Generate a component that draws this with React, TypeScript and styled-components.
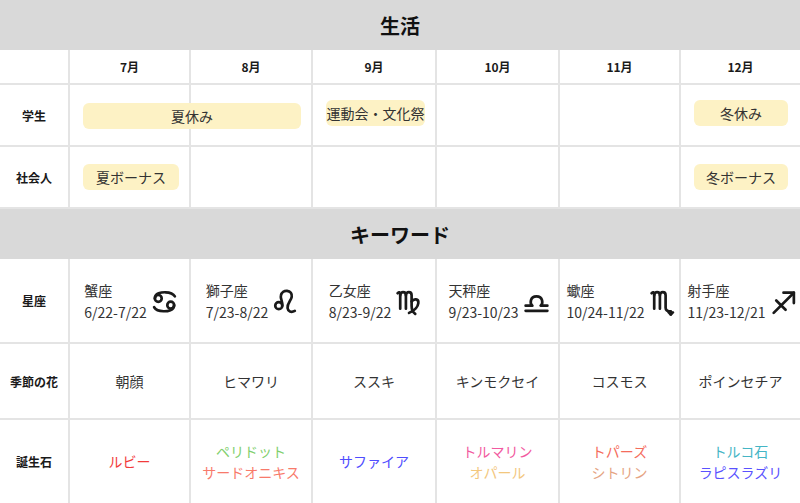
import React from 'react';
import styled, { createGlobalStyle } from 'styled-components';

const COLS = '70px 121px 122px 124px 123px 121px 1fr';
const LINE = '#e4e4e4';

const GlobalStyle = createGlobalStyle`
    *, *::before, *::after {
        box-sizing: border-box;
    }
    body {
        margin: 0;
        background: #ffffff;
        font-family: 'Noto Sans CJK JP', 'Noto Sans', sans-serif;
        color: #333333;
    }
`;

const Page = styled.div`
    width: 800px;
    height: 503px;
    overflow: hidden;
`;

const SectionTitle = styled.div`
    height: 50px;
    display: flex;
    align-items: center;
    justify-content: center;
    background-color: #d9d9d9;
    font-size: 20px;
    font-weight: 700;
    color: #111111;
`;

const Row = styled.div<{ $h: number; $last?: boolean }>`
    display: grid;
    grid-template-columns: ${COLS};
    height: ${(p) => p.$h}px;
    border-bottom: ${(p) => (p.$last ? 'none' : `2px solid ${LINE}`)};
`;

const Cell = styled.div<{ $col: number }>`
    grid-row: 1;
    grid-column: ${(p) => p.$col};
    display: flex;
    align-items: center;
    justify-content: center;
    border-right: ${(p) => (p.$col === 7 ? 'none' : `2px solid ${LINE}`)};
    font-size: 14px;
    color: #333333;
`;

const Label = styled(Cell)`
    font-size: 12px;
    font-weight: 700;
    color: #1a1a1a;
`;

const Month = styled(Cell)`
    font-size: 12px;
    font-weight: 700;
    color: #1a1a1a;
`;

const ChipSlot = styled.div<{ $col: number; $span: number; $dy: number }>`
    grid-row: 1;
    grid-column: ${(p) => p.$col} / span ${(p) => p.$span};
    display: flex;
    align-items: center;
    padding: 0 12px 0 13px;
    margin-top: ${(p) => p.$dy}px;
    z-index: 1;
`;

const Chip = styled.div`
    width: 100%;
    height: 26px;
    display: flex;
    align-items: center;
    justify-content: center;
    background-color: #fdf2c5;
    border-radius: 6px;
    font-size: 14px;
    color: #333333;
    white-space: nowrap;
`;

const SignCell = styled(Cell)`
    gap: 5px;
    padding-left: 2px;
`;

const SignText = styled.div`
    font-size: 14px;
    line-height: 22px;
    color: #333333;
    white-space: nowrap;
`;

const Glyph = styled.svg`
    width: 25px;
    height: 29px;
    flex-shrink: 0;
    margin-top: 2px;
    fill: none;
    stroke: #1a1a1a;
    stroke-width: 2.6;
    stroke-linecap: round;
    stroke-linejoin: round;
`;

const Stones = styled(Cell)`
    flex-direction: column;
    line-height: 21px;
`;

const Stone = styled.div<{ $color: string }>`
    color: ${(p) => p.$color};
    font-size: 14px;
    white-space: nowrap;
`;

const Cancer = () => (
    <Glyph viewBox="0 0 24 28">
        <circle cx="6" cy="11" r="3.3" />
        <path d="M2.7 11C2.7 6 9 5 13 5.1C17 5.2 20.5 6.5 22 9" />
        <circle cx="18" cy="17.5" r="3.3" />
        <path d="M21.3 17.5C21.3 22.5 15 23.5 11 23.4C7 23.3 3.5 22 2 19.5" />
    </Glyph>
);

const Leo = () => (
    <Glyph viewBox="0 0 24 28">
        <circle cx="5.5" cy="18" r="3.4" />
        <path d="M8.9 18C9.4 14 7 11.5 7.5 8.5C8 5 11 3.5 13.5 3.7C16.8 3.9 18.5 6.5 18 9.5C17.5 13 13.5 15.5 14 20.5C14.3 23.5 17.5 25 21 23" />
    </Glyph>
);

const Virgo = () => (
    <Glyph viewBox="0 0 24 28">
        <path d="M1.5 6C2.5 4.5 4 5 4 7V21" />
        <path d="M4 8C4 4 9.5 4 9.5 8V21" />
        <path d="M9.5 8C9.5 4 15 4 15 8V18C15 22 16.5 24.5 18.5 26" />
        <path d="M15 14C17 11 22 11 21.5 15.5C21 20 17 23 12.5 25" />
    </Glyph>
);

const Libra = () => (
    <Glyph viewBox="0 0 24 28">
        <path d="M1.5 23H22.5" />
        <path d="M1.5 18H8C5.5 16.5 5.5 9 12 9C18.5 9 18.5 16.5 16 18H22.5" />
    </Glyph>
);

const Scorpio = () => (
    <Glyph viewBox="0 0 24 28">
        <path d="M1.5 6C2.5 4.5 4 5 4 7V21" />
        <path d="M4 8C4 4 9.5 4 9.5 8V21" />
        <path d="M9.5 8C9.5 4 15 4 15 8V20C15 22.5 16.5 23.5 20 23.5V26.5" />
        <path d="M18 24.5L20 26.5L22 24.5" />
    </Glyph>
);

const Sagittarius = () => (
    <Glyph viewBox="0 0 24 28">
        <path d="M2.5 25L22 5.5" />
        <path d="M12 5.5H22V15.5" />
        <path d="M5 13L14 22" />
    </Glyph>
);

const months = ['7月', '8月', '9月', '10月', '11月', '12月'];

type ChipData = { text: string; col: number; span: number; dy: number };

const lifeRows: { label: string; chips: ChipData[] }[] = [
    {
        label: '学生',
        chips: [
            { text: '夏休み', col: 2, span: 2, dy: 2 },
            { text: '運動会・文化祭', col: 4, span: 1, dy: -5 },
            { text: '冬休み', col: 7, span: 1, dy: -5 },
        ],
    },
    {
        label: '社会人',
        chips: [
            { text: '夏ボーナス', col: 2, span: 1, dy: 0 },
            { text: '冬ボーナス', col: 7, span: 1, dy: 0 },
        ],
    },
];

const signs = [
    { name: '蟹座', dates: '6/22-7/22', Icon: Cancer },
    { name: '獅子座', dates: '7/23-8/22', Icon: Leo },
    { name: '乙女座', dates: '8/23-9/22', Icon: Virgo },
    { name: '天秤座', dates: '9/23-10/23', Icon: Libra },
    { name: '蠍座', dates: '10/24-11/22', Icon: Scorpio },
    { name: '射手座', dates: '11/23-12/21', Icon: Sagittarius },
];

const flowers = ['朝顔', 'ヒマワリ', 'ススキ', 'キンモクセイ', 'コスモス', 'ポインセチア'];

const stones: { text: string; color: string }[][] = [
    [{ text: 'ルビー', color: '#f23b3b' }],
    [
        { text: 'ペリドット', color: '#7fcf6e' },
        { text: 'サードオニキス', color: '#f87a6b' },
    ],
    [{ text: 'サファイア', color: '#4f4dff' }],
    [
        { text: 'トルマリン', color: '#f25aa0' },
        { text: 'オパール', color: '#f3c77e' },
    ],
    [
        { text: 'トパーズ', color: '#f56c5c' },
        { text: 'シトリン', color: '#e5a483' },
    ],
    [
        { text: 'トルコ石', color: '#45b5c5' },
        { text: 'ラピスラズリ', color: '#5a52ff' },
    ],
];

const EmptyCells = () => (
    <>
        {months.map((m, i) => (
            <Cell key={m} $col={i + 2} />
        ))}
    </>
);

export default function App() {
    return (
        <Page>
            <GlobalStyle />
            <SectionTitle>生活</SectionTitle>
            <Row $h={35}>
                <Label $col={1} />
                {months.map((m, i) => (
                    <Month key={m} $col={i + 2}>
                        {m}
                    </Month>
                ))}
            </Row>
            {lifeRows.map((row) => (
                <Row key={row.label} $h={62}>
                    <Label $col={1}>{row.label}</Label>
                    <EmptyCells />
                    {row.chips.map((c) => (
                        <ChipSlot key={c.text} $col={c.col} $span={c.span} $dy={c.dy}>
                            <Chip>{c.text}</Chip>
                        </ChipSlot>
                    ))}
                </Row>
            ))}

            <SectionTitle>キーワード</SectionTitle>
            <Row $h={85}>
                <Label $col={1}>星座</Label>
                {signs.map(({ name, dates, Icon }, i) => (
                    <SignCell key={name} $col={i + 2}>
                        <SignText>
                            {name}
                            <br />
                            {dates}
                        </SignText>
                        <Icon />
                    </SignCell>
                ))}
            </Row>
            <Row $h={76}>
                <Label $col={1}>季節の花</Label>
                {flowers.map((f, i) => (
                    <Cell key={f} $col={i + 2}>
                        {f}
                    </Cell>
                ))}
            </Row>
            <Row $h={83} $last>
                <Label $col={1}>誕生石</Label>
                {stones.map((list, i) => (
                    <Stones key={i} $col={i + 2}>
                        {list.map((s) => (
                            <Stone key={s.text} $color={s.color}>
                                {s.text}
                            </Stone>
                        ))}
                    </Stones>
                ))}
            </Row>
        </Page>
    );
}
